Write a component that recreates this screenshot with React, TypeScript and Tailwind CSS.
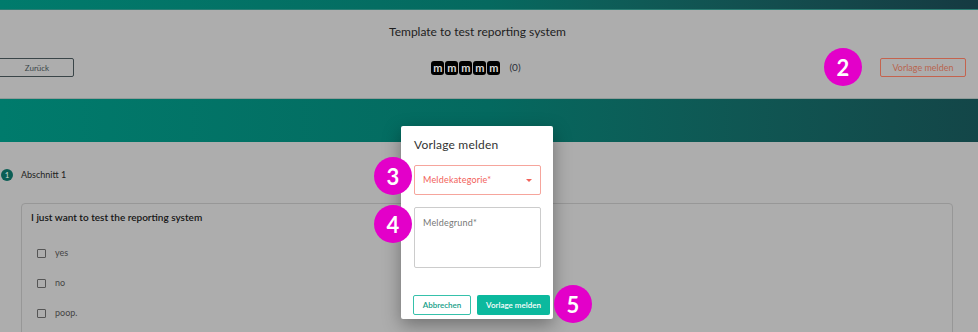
import React from 'react';

const font = { fontFamily: 'Lato, "Noto Sans", sans-serif' };

// Magenta step marker laid over the screenshot
const Marker = ({ n, className }: { n: number; className: string }) => (
  <div
    className={`absolute w-[38px] h-[38px] rounded-full bg-[#e300c9] text-white text-[22px] font-bold flex items-center justify-center ${className}`}
  >
    {n}
  </div>
);

const Option = ({ label }: { label: string }) => (
  <div className="flex items-center gap-[9px] h-[10px]">
    <span className="w-[9px] h-[9px] border border-[#555] rounded-[1px]" />
    <span className="text-[9px] text-[#444]">{label}</span>
  </div>
);

export default function App() {
  return (
    <div className="relative w-full h-[332px] overflow-hidden bg-[#adadad]" style={font}>
      {/* top bar */}
      <div className="h-[10px] bg-gradient-to-r from-[#007b6c] via-[#05695f] to-[#153a42] border-b border-[#2c7d73]" />

      {/* header */}
      <div className="h-[89px] flex flex-col border-b border-[#8f9a98]">
        <h1 className="pt-[14px] pr-[23px] text-center text-[12px] leading-[16px] text-[#1e1e1e]">
          Template to test reporting system
        </h1>
        <div className="mt-[18px] flex items-center justify-between pr-[12px]">
          <button className="ml-[-10px] w-[84px] h-[19px] border border-[#3a4548] rounded-[2px] text-[8px] text-[#3a4548] flex items-center justify-center pl-[10px]">
            Zurück
          </button>
          <div className="flex items-center gap-[9px] ml-[-2px]">
            <div className="flex gap-[1px]">
              {[0, 1, 2, 3, 4].map((i) => (
                <span
                  key={i}
                  className="w-[13px] h-[14px] rounded-[3px] bg-black text-[#d8d8d8] text-[11px] leading-[12px] font-bold flex items-center justify-center"
                >
                  m
                </span>
              ))}
            </div>
            <span className="text-[10px] text-[#2a2f38]">(0)</span>
          </div>
          <button className="w-[86px] h-[19px] border border-[#c4634e] rounded-[2px] text-[9px] text-[#b9654f] flex items-center justify-center">
            Vorlage melden
          </button>
        </div>
      </div>

      {/* second band */}
      <div className="h-[43px] bg-gradient-to-r from-[#007b6c] via-[#04695f] to-[#134648]" />

      {/* content */}
      <div className="pt-[26px] pr-[25px]">
        <div className="flex items-center gap-[8px] pl-[1px] h-[14px]">
          <span className="w-[12px] h-[12px] rounded-full bg-[#0b5e55] text-[#c8d8d4] text-[8px] flex items-center justify-center">
            1
          </span>
          <span className="text-[9px] text-[#222]">Abschnitt 1</span>
        </div>
        <div className="mt-[21px] ml-[21px] h-[140px] border border-[#979797] rounded-[4px] pt-[6px] pl-[9px]">
          <p className="text-[10px] text-[#151515] font-semibold">I just want to test the reporting system</p>
          <div className="mt-[23px] pl-[6px] flex flex-col gap-[20px]">
            <Option label="yes" />
            <Option label="no" />
            <Option label="poop." />
          </div>
        </div>
      </div>

      {/* dialog */}
      <div className="absolute left-[401px] top-[126px] w-[152px] h-[193px] bg-white rounded-[2px] shadow-[0_6px_18px_rgba(0,0,0,0.35)] px-[13px] pt-[12px] flex flex-col">
        <h2 className="text-[12px] leading-[14px] text-[#333] tracking-[0.2px]">Vorlage melden</h2>
        <div className="mt-[13px] h-[30px] w-[127px] border border-[#f6a59c] rounded-[2px] flex items-center justify-between pl-[8px] pr-[8px]">
          <span className="text-[9px] text-[#f2625a] tracking-[0.2px]">Meldekategorie*</span>
          <span className="w-0 h-0 border-l-[3px] border-r-[3px] border-t-[3px] border-l-transparent border-r-transparent border-t-[#f2625a]" />
        </div>
        <div className="mt-[12px] h-[61px] w-[127px] border border-[#cccccc] rounded-[2px] pl-[8px] pt-[9px]">
          <p className="text-[9px] leading-[12px] text-[#777] tracking-[0.2px]">Meldegrund*</p>
        </div>
        <div className="mt-[27px] flex gap-[6px] ml-[-1px]">
          <button className="shrink-0 w-[58px] h-[20px] border border-[#36c1ab] rounded-[2px] text-[8px] text-[#149e88] font-semibold flex items-center justify-center">
            Abbrechen
          </button>
          <button className="shrink-0 w-[73px] h-[20px] bg-[#0cb99e] rounded-[2px] text-[8px] text-white font-semibold flex items-center justify-center">
            Vorlage melden
          </button>
        </div>
      </div>

      <Marker n={2} className="left-[824px] top-[48px]" />
      <Marker n={3} className="left-[374px] top-[157px]" />
      <Marker n={4} className="left-[374px] top-[205px]" />
      <Marker n={5} className="left-[554px] top-[285px]" />
    </div>
  );
}
